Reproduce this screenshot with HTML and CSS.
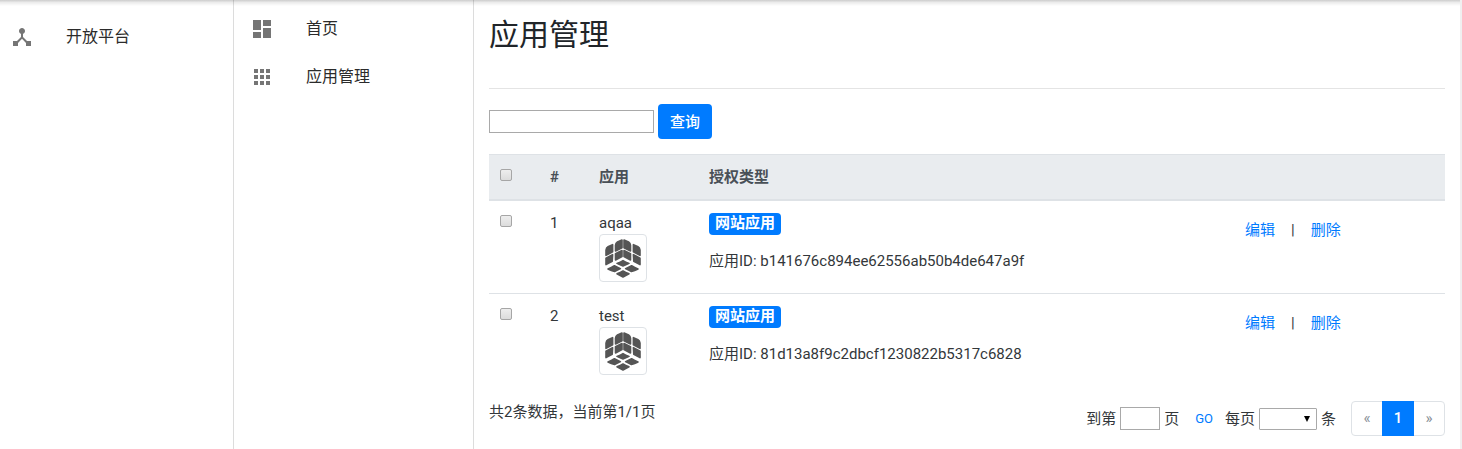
FILE: index.html
```html
<!DOCTYPE html>
<html lang="zh-CN">
<head>
<meta charset="utf-8">
<title>应用管理</title>
<link rel="stylesheet" href="styles.css">
</head>
<body>
<svg class="defs" aria-hidden="true">
  <symbol id="cube" viewBox="0 0 36 39">
    <g fill="#555" stroke="#555" stroke-width="1.6" stroke-linejoin="round">
      <path d="M1 11Q1.3 8.6 3 7.8L7.6 5.6V12.8L1 16.4ZM1 19.2 7.6 15.6 7.2 22.2 1 25.6ZM10.5 6.4Q10.6 4 12.4 3L17 1V8.8L10.5 12ZM10.5 14.6 17 11.5V17.6L10.5 21Z"/>
      <path d="M35 11Q34.7 8.6 33 7.8L28.4 5.6V12.8L35 16.4ZM35 19.2 28.4 15.6 28.8 22.2 35 25.6ZM25.5 6.4Q25.4 4 23.6 3L19 1V8.8L25.5 12ZM25.5 14.6 19 11.5V17.6L25.5 21Z"/>
      <path d="M12 24.4Q15.5 23 18 21.6 20.5 23 24 24.4 20.5 26.2 18 27 15.5 26.2 12 24.4ZM3 29.9Q6.4 28.6 9.4 26.8 12.4 28.2 15.4 29.6 12.4 31.2 9.6 32.4 6.4 31.4 3 29.9ZM33 29.9Q29.6 28.6 26.6 26.8 23.6 28.2 20.6 29.6 23.6 31.2 26.4 32.4 29.6 31.4 33 29.9ZM12 34.8Q15.5 33.4 18 32 20.5 33.4 24 34.8 20.5 36.8 18 38 15.5 36.8 12 34.8Z"/>
    </g>
  </symbol>
</svg>
<div class="layout">
  <nav class="sidebar sidebar-main">
    <a class="nav-item" href="#"><svg class="icon" viewBox="0 0 24 24"><path d="M17 16l-4-4V8.82C14.16 8.4 15 7.3 15 6c0-1.66-1.34-3-3-3S9 4.34 9 6c0 1.3.84 2.4 2 2.82V12l-4 4H3v5h5v-3.05l4-4.2 4 4.2V21h5v-5h-4z"/></svg>开放平台</a>
  </nav>
  <nav class="sidebar sidebar-sub">
    <a class="nav-item" href="#"><svg class="icon" viewBox="0 0 24 24"><path d="M3 13h8V3H3v10zm0 8h8v-6H3v6zm10 0h8V11h-8v10zm0-18v6h8V3h-8z"/></svg>首页</a>
    <a class="nav-item" href="#"><svg class="icon" viewBox="0 0 24 24"><path d="M4 8h4V4H4v4zm6 12h4v-4h-4v4zm-6 0h4v-4H4v4zm0-6h4v-4H4v4zm6 0h4v-4h-4v4zm6-10v4h4V4h-4zm-6 4h4V4h-4v4zm6 6h4v-4h-4v4zm0 6h4v-4h-4v4z"/></svg>应用管理</a>
  </nav>
  <main class="content">
    <h1 class="title">应用管理</h1>
    <form class="search">
      <input class="field" type="text" aria-label="查询">
      <button class="btn" type="button">查询</button>
    </form>
    <table class="table">
      <thead>
        <tr><th class="col-check"><input class="check" type="checkbox" aria-label="全选"></th><th class="col-num">#</th><th class="col-app">应用</th><th>授权类型</th><th class="col-actions"></th></tr>
      </thead>
      <tbody>
        <tr>
          <td><input class="check" type="checkbox" aria-label="aqaa"></td>
          <td>1</td>
          <td>aqaa<svg class="thumb"><use href="#cube"/></svg></td>
          <td><span class="badge">网站应用</span><p class="app-id">应用ID: b141676c894ee62556ab50b4de647a9f</p></td>
          <td><div class="actions"><a href="#">编辑</a><span>|</span><a href="#">删除</a></div></td>
        </tr>
        <tr>
          <td><input class="check" type="checkbox" aria-label="test"></td>
          <td>2</td>
          <td>test<svg class="thumb"><use href="#cube"/></svg></td>
          <td><span class="badge">网站应用</span><p class="app-id">应用ID: 81d13a8f9c2dbcf1230822b5317c6828</p></td>
          <td><div class="actions"><a href="#">编辑</a><span>|</span><a href="#">删除</a></div></td>
        </tr>
      </tbody>
    </table>
    <footer class="footer">
      <span>共2条数据，当前第1/1页</span>
      <div class="pager">
        <label class="pair">到第 <input class="field field-page" type="text"> 页</label>
        <button class="go" type="button">GO</button>
        <label class="pair">每页 <span class="select-wrap"><select class="select"><option></option></select><svg class="caret" viewBox="0 0 6 6"><path d="M0 0h6L3 6z"/></svg></span> 条</label>
        <div class="pages"><a href="#">«</a><a class="current" href="#">1</a><a href="#">»</a></div>
      </div>
    </footer>
  </main>
</div>
</body>
</html>
```
FILE: styles.css
```css
* { box-sizing: border-box; }

body {
  margin: 0;
  color: #33373a;
  background: #fff;
  font: 15px/22px Roboto, "Noto Sans CJK SC", sans-serif;
}

body::before {
  content: "";
  position: absolute;
  top: 0;
  left: 0;
  right: 2px;
  height: 6px;
  background: linear-gradient(rgba(0, 0, 0, 0.2), rgba(0, 0, 0, 0.08) 40%, transparent);
}

a { color: #007bff; text-decoration: none; }
input, select, button { font: inherit; margin: 0; }
.defs { position: absolute; width: 0; height: 0; }

.layout {
  display: flex;
  min-height: 100vh;
  border-right: 2px solid #f0f0f0;
}

.sidebar { flex: none; border-right: 1px solid #dcdcdc; }
.sidebar-main { width: 234px; padding: 13px 10px; }
.sidebar-sub { width: 240px; padding: 5px 16px; }

.nav-item {
  display: flex;
  align-items: center;
  gap: 32px;
  height: 48px;
  color: #2b2b2b;
  font-size: 16px;
}

.icon { width: 24px; height: 24px; fill: #757575; }

.content { flex: 1; min-width: 0; padding: 15px; }

.title {
  margin: 0 0 15px;
  padding-bottom: 33px;
  border-bottom: 1px solid #e4e4e4;
  color: #212529;
  font-size: 30px;
  font-weight: 400;
  line-height: 40px;
}

.search { display: flex; align-items: center; gap: 4px; margin-bottom: 15px; }
.field { width: 165px; height: 23px; border: 1px solid #a9a9a9; background: #fff; }

.btn {
  height: 35px;
  padding: 0 12px;
  border: 0;
  border-radius: 4px;
  color: #fff;
  background: #007bff;
  font-weight: 500;
}

.table { width: 100%; table-layout: fixed; border-spacing: 0; margin-bottom: 15px; }
.table th, .table td { padding: 11px; text-align: left; vertical-align: top; }
.table th {
  color: #495057;
  background: #e9ecef;
  border-top: 1px solid #dee2e6;
  border-bottom: 2px solid #dee2e6;
  font-weight: 700;
}
.table tr + tr td { border-top: 1px solid #dee2e6; }
.col-check { width: 50px; }
.col-num { width: 49px; }
.col-app { width: 110px; }
.col-actions { width: 211px; }

.check {
  display: block;
  appearance: none;
  width: 12px;
  height: 12px;
  margin-top: 3px;
  border: 1px solid #a6a6a6;
  border-radius: 2px;
  background: linear-gradient(#eee, #dcdcdc);
}

.thumb {
  display: block;
  width: 48px;
  height: 48px;
  padding: 4px 5px 3px;
  border: 1px solid #dee2e6;
  border-radius: 4px;
}

.badge {
  display: block;
  width: fit-content;
  height: 22px;
  margin-top: 1px;
  padding: 0 6px;
  border-radius: 4px;
  color: #fff;
  background: #007bff;
  font-weight: 700;
  line-height: 20px;
}

.app-id { margin: 15px 0 0; }
.actions { display: flex; gap: 16px; padding-top: 7px; }

.footer { display: flex; justify-content: space-between; align-items: flex-start; }
.pager { display: flex; align-items: center; }
.pair { display: flex; align-items: center; gap: 4px; }
.field-page { width: 40px; }

.go {
  padding: 0 12px 0 16px;
  border: 0;
  color: #007bff;
  background: none;
  font-size: 13px;
}

.select-wrap { position: relative; display: flex; }
.select {
  appearance: none;
  width: 58px;
  height: 22px;
  border: 1px solid #a9a9a9;
  border-radius: 1px;
  background: #fff;
}
.caret { position: absolute; top: 8px; right: 7px; width: 6px; height: 6px; fill: #000; pointer-events: none; }

.pages { display: flex; margin-left: 15px; border: 1px solid #dee2e6; border-radius: 4px; }
.pages a { width: 30px; line-height: 33px; text-align: center; color: #868e96; }
.pages .current { width: 32px; margin: -1px 0; line-height: 35px; color: #fff; background: #007bff; font-weight: 500; }
```
